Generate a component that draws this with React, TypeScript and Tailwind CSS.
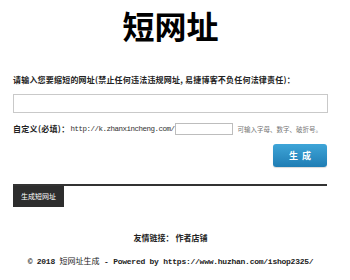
import React from "react";

const cjk = { fontFamily: '"Noto Sans CJK SC", "Liberation Sans", sans-serif' };
const mono = { fontFamily: '"Liberation Mono", "Noto Sans CJK SC", monospace' };

export default function App() {
  return (
    <div className="w-[350px] h-[280px] bg-white overflow-hidden" style={cjk}>
      <div className="w-[315px] ml-[13px] flex flex-col">
        <h1 className="h-[51px] leading-[51px] text-center text-[32px] font-bold text-black">短网址</h1>
        <div className="mt-[23px] h-[12px] leading-[12px] text-[8px] font-bold text-[#222] whitespace-nowrap tracking-[0.2px]">
          请输入您要缩短的网址(禁止任何违法违规网址, 易捷博客不负任何法律责任)：
        </div>
        <input
          type="text"
          className="mt-[8px] h-[19px] w-[315px] border border-[#c9c9c9] bg-white outline-none"
        />
        <div className="mt-[10px] h-[12px] flex items-center whitespace-nowrap">
          <span className="text-[8px] font-bold text-[#222] leading-[12px] tracking-[0.3px]">自定义(必填)：</span>
          <span className="ml-[1px] text-[7.5px] tracking-[-0.5px] text-[#333] leading-[12px]" style={mono}>
            http://k.zhanxincheng.com/
          </span>
          <input
            type="text"
            className="ml-[1px] h-[12px] w-[58px] border border-[#bdbdbd] bg-white outline-none"
          />
          <span className="ml-[4px] text-[6.5px] text-[#777] leading-[12px]">可输入字母、数字、破折号。</span>
        </div>
        <div className="mt-[9px] flex justify-end pr-[1px]">
          <button className="h-[23px] w-[54px] rounded-[3px] bg-gradient-to-b from-[#3ea5d8] to-[#1f7db4] text-white text-[9px] font-bold tracking-[4px] pl-[4px] shadow-[0_1px_1px_rgba(0,0,0,0.15)]">
            生成
          </button>
        </div>
        <div className="mt-[17px] border-t-2 border-[#333] w-[314px]" />
        <div className="flex">
          <div className="h-[21px] w-[51px] bg-[#2d2d2d] text-white text-[7px] leading-[21px] text-center">
            生成短网址
          </div>
        </div>
        <div className="mt-[25px] h-[12px] leading-[12px] text-center text-[8px] font-bold text-[#222] whitespace-nowrap">
          友情链接： 作者店铺
        </div>
        <div className="mt-[7px] h-[12px] leading-[12px] text-center whitespace-nowrap text-[#222] font-bold">
          <span className="text-[8px] tracking-[-0.25px]" style={mono}>© 2018 </span>
          <span className="text-[8px] font-normal">短网址生成</span>
          <span className="text-[8px] tracking-[-0.25px]" style={mono}> - Powered by https://www.huzhan.com/ishop2325/</span>
        </div>
      </div>
    </div>
  );
}
